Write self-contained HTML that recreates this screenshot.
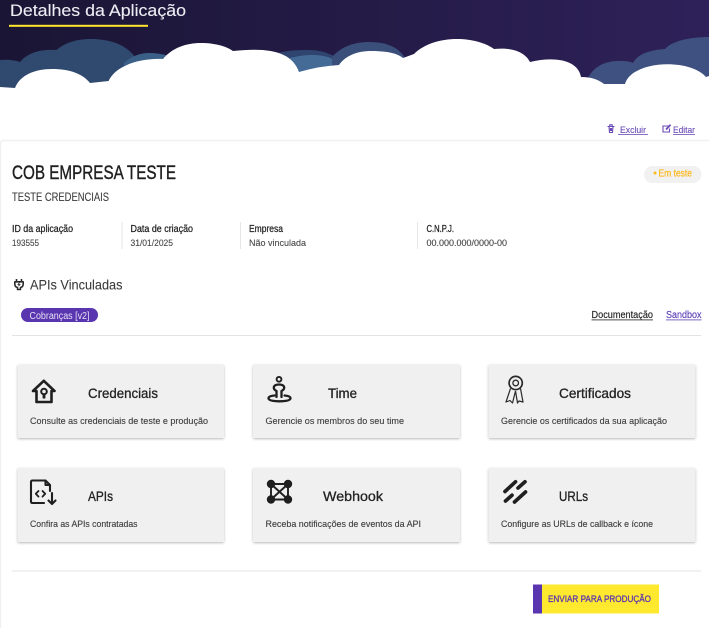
<!DOCTYPE html>
<html lang="pt-BR">
<head>
<meta charset="utf-8">
<title>Detalhes da Aplicação</title>
<style>
html,body{margin:0;padding:0;background:#fff;width:709px;height:628px;overflow:hidden}
svg{display:block;filter:blur(.25px)}
text{font-family:"Liberation Sans",sans-serif}
.card{fill:#f0f0f0;filter:url(#sh)}
.t{font-size:14px;fill:#222;stroke:#222;stroke-width:.3px}
.d{font-size:9.5px;fill:#3c3c3c;stroke:#3c3c3c;stroke-width:.12px}
.h{font-size:10px;fill:#1f1f1f;stroke:#1f1f1f;stroke-width:.25px}
.v{font-size:9.5px;fill:#484848;stroke:#484848;stroke-width:.12px}
.ic{fill:none;stroke:#1f1f1f;stroke-width:2.3;stroke-linejoin:round;stroke-linecap:round}
</style>
</head>
<body>
<svg xmlns="http://www.w3.org/2000/svg" width="709" height="628" viewBox="0 0 709 628">
<defs>
<linearGradient id="bg" x1="0" x2="1" y1="0" y2="0"><stop offset="0" stop-color="#1a1534"/><stop offset="1" stop-color="#2e2159"/></linearGradient>
<filter id="sh" x="-5%" y="-10%" width="110%" height="125%"><feDropShadow dx="0" dy="1" stdDeviation="1.3" flood-color="#000" flood-opacity=".28"/></filter>
</defs>

<rect width="709" height="100" fill="url(#bg)"/>
<!-- back clouds -->
<path fill="#30496f" d="M0 60Q12 59 20 62C28 52 42 49 56.5 50C66 42 78 39 90.5 39C112 39 130 46 138 62L138 95L0 95Z"/>
<path fill="#3b6088" d="M124 63C132 56 140 53 149 53C162 53 172 56 180 62L180 90L124 90Z"/>
<path fill="#2f4570" d="M274 54C288 50 298 50 308 50C318 50 326 52 334 56L340 90L274 90Z"/>
<path fill="#446a96" d="M290 58C298 56 305 55 312 55C325 55 335 58 341 66L341 90L290 90Z"/>
<path fill="#3a4f7a" d="M332 57C342 46 355 42 369 42C388 42 400 48 406 60L406 90L332 90Z"/>
<path fill="#3f5180" d="M588 78C594 66 606 61 618 61C624 61 630 61 633 63C637 55 648 50 665 49C672 41 690 37 709 37L709 95L588 95Z"/>
<!-- white cloud -->
<path fill="#fff" d="M0 87L15 88C20 75 35 69 52 69C70 69 83 74 90 83L108.6 81C114 68 135 58 163 59C172 48 186 43 201 43C214 43 226 46 233 51C270 47 292 52 299 72Q320 66 339 65C345 56 357 51 371 51C385 51 397 53 403 58L414 54C424 44 440 39 457 39C472 39 486 43 494 49C512 47 525 52 530 62C555 56 578 60 581 77C592 77 599 80 604 84L625 84C632 60 690 58 706 77L709 76L709 145L0 145Z"/>

<text x="10" y="16" font-size="16.5" fill="#ececf2" stroke="#ececf2" stroke-width=".12" textLength="176" lengthAdjust="spacingAndGlyphs">Detalhes da Aplicação</text>
<rect x="9" y="24.8" width="139" height="2" fill="#ffe52e"/>

<!-- top actions -->
<g fill="none" stroke="#6a4bb5" stroke-width="1.1">
<path d="M607.5 126.5H614.5M609 126.5L609.5 132.5H612.5L613 126.5M609.8 126V124.8H612.2V126M610.5 128V131M611.5 128V131"/>
<path d="M669 126H663V132H669.5V128.5"/>
<path d="M666 129.5L670.5 124.8" stroke-width="1.8"/>
</g>
<text x="620" y="133" font-size="9.5" fill="#6a4bb5" stroke="#6a4bb5" stroke-width=".12" textLength="26" lengthAdjust="spacingAndGlyphs">Excluir</text>
<rect x="618" y="134" width="30" height=".8" fill="#6a4bb5"/>
<text x="673" y="133" font-size="9.5" fill="#6a4bb5" stroke="#6a4bb5" stroke-width=".12" textLength="22" lengthAdjust="spacingAndGlyphs">Editar</text>
<rect x="673" y="134" width="22" height=".8" fill="#6a4bb5"/>

<!-- main card edges -->
<path d="M.5 628V144Q.5 140.5 4 140.5H709" fill="none" stroke="#f0f0f0" stroke-width="1.4"/>

<text x="12" y="179" font-size="19" fill="#1f1f1f" stroke="#1f1f1f" stroke-width=".4" textLength="164" lengthAdjust="spacingAndGlyphs">COB EMPRESA TESTE</text>
<text x="12" y="201" font-size="11.5" fill="#3c3c3c" stroke="#3c3c3c" stroke-width=".1" textLength="97" lengthAdjust="spacingAndGlyphs">TESTE CREDENCIAIS</text>

<rect x="644" y="166" width="57.5" height="17" rx="8.5" fill="#f1f1f1"/>
<circle cx="655" cy="173" r="1.5" fill="#fcb91e"/>
<text x="658.5" y="176.5" font-size="10" fill="#fcb91e" stroke="#fcb91e" stroke-width=".25" textLength="33.5" lengthAdjust="spacingAndGlyphs">Em teste</text>

<g fill="#e6e6e6">
<rect x="121.5" y="222" width="1" height="27"/>
<rect x="240" y="222" width="1" height="27"/>
<rect x="417" y="222" width="1" height="27"/>
</g>
<text class="h" x="12" y="232" textLength="61" lengthAdjust="spacingAndGlyphs">ID da aplicação</text>
<text class="v" x="12" y="246" textLength="27" lengthAdjust="spacingAndGlyphs">193555</text>
<text class="h" x="130.5" y="232" textLength="62.5" lengthAdjust="spacingAndGlyphs">Data de criação</text>
<text class="v" x="130.5" y="246" textLength="42.5" lengthAdjust="spacingAndGlyphs">31/01/2025</text>
<text class="h" x="249" y="232" textLength="34" lengthAdjust="spacingAndGlyphs">Empresa</text>
<text class="v" x="249" y="246" textLength="57" lengthAdjust="spacingAndGlyphs">Não vinculada</text>
<text class="h" x="426.5" y="232" textLength="27.5" lengthAdjust="spacingAndGlyphs">C.N.P.J.</text>
<text class="v" x="426.5" y="246" textLength="80.5" lengthAdjust="spacingAndGlyphs">00.000.000/0000-00</text>

<!-- plug icon -->
<path d="M16.5 279V281.5M21.5 279V281.5M14.8 281.8H23.2V284Q23.2 287 20.5 287.5V289.5H17.5V287.5Q14.8 287 14.8 284Z" fill="none" stroke="#2a2a2a" stroke-width="1.6" stroke-linejoin="round"/>
<path d="M19.6 282.5L18 284.5H20L18.4 286.2" fill="none" stroke="#2a2a2a" stroke-width=".8"/>
<text x="30" y="289.5" font-size="14" fill="#3c3c3c" stroke="#3c3c3c" stroke-width=".1" textLength="92.5" lengthAdjust="spacingAndGlyphs">APIs Vinculadas</text>

<rect x="21" y="308" width="77" height="14" rx="7" fill="#5a35b0"/>
<text x="29.5" y="319" font-size="10" fill="#e6e2f4" textLength="60" lengthAdjust="spacingAndGlyphs">Cobranças [v2]</text>

<text x="591.5" y="318" font-size="10" fill="#1f1f1f" stroke="#1f1f1f" stroke-width=".15" textLength="61.5" lengthAdjust="spacingAndGlyphs">Documentação</text>
<rect x="591.5" y="319.5" width="61.5" height=".8" fill="#222"/>
<text x="666" y="318" font-size="10" fill="#5a3fb5" stroke="#5a3fb5" stroke-width=".15" textLength="35.5" lengthAdjust="spacingAndGlyphs">Sandbox</text>
<rect x="666" y="319.5" width="35.5" height=".8" fill="#5a3fb5"/>

<rect x="12" y="335" width="689" height="1" fill="#e3e3e3"/>

<!-- cards -->
<rect class="card" x="17.5" y="364.5" width="206.5" height="73.5" rx="1.5"/>
<rect class="card" x="253" y="364.5" width="207" height="73.5" rx="1.5"/>
<rect class="card" x="488.5" y="364.5" width="207" height="73.5" rx="1.5"/>
<rect class="card" x="17.5" y="468" width="206.5" height="74" rx="1.5"/>
<rect class="card" x="253" y="468" width="207" height="74" rx="1.5"/>
<rect class="card" x="488.5" y="468" width="207" height="74" rx="1.5"/>

<text class="t" x="88" y="398" textLength="70" lengthAdjust="spacingAndGlyphs">Credenciais</text>
<text class="t" x="328" y="398" textLength="29" lengthAdjust="spacingAndGlyphs">Time</text>
<text class="t" x="559" y="398" textLength="72" lengthAdjust="spacingAndGlyphs">Certificados</text>
<text class="t" x="88" y="501" textLength="25" lengthAdjust="spacingAndGlyphs">APIs</text>
<text class="t" x="323" y="501" textLength="60" lengthAdjust="spacingAndGlyphs">Webhook</text>
<text class="t" x="559" y="501" textLength="29" lengthAdjust="spacingAndGlyphs">URLs</text>

<text class="d" x="30" y="424" textLength="178" lengthAdjust="spacingAndGlyphs">Consulte as credenciais de teste e produção</text>
<text class="d" x="265.5" y="424" textLength="138.5" lengthAdjust="spacingAndGlyphs">Gerencie os membros do seu time</text>
<text class="d" x="501" y="424" textLength="166" lengthAdjust="spacingAndGlyphs">Gerencie os certificados da sua aplicação</text>
<text class="d" x="30" y="527" textLength="107.5" lengthAdjust="spacingAndGlyphs">Confira as APIs contratadas</text>
<text class="d" x="265.5" y="527" textLength="155.5" lengthAdjust="spacingAndGlyphs">Receba notificações de eventos da API</text>
<text class="d" x="501" y="527" textLength="152" lengthAdjust="spacingAndGlyphs">Configure as URLs de callback e ícone</text>

<!-- icon: credenciais -->
<g class="ic">
<path d="M36.5 391H33L43.8 380.8L54.5 391H51.5V402H36.5Z" stroke-width="2.6"/>
<circle cx="44" cy="391.5" r="2.8" stroke-width="2"/>
<path d="M44 394V398.5" stroke-width="2.8" stroke-linecap="butt"/>
</g>
<!-- icon: time -->
<g class="ic">
<circle cx="279" cy="379.3" r="2.4" stroke-width="1.9"/>
<path d="M276.5 397V391Q273.5 389.5 273.8 387.2Q274.5 384.5 279 384.5Q283.5 384.5 284.2 387.2Q284.5 389.5 281.5 391V397"/>
<path d="M274.5 395.5Q268.5 396 268.5 398.3Q268.8 401.3 279.5 401.3Q290.2 401.3 290.5 398.3Q290.5 396 284.5 395.5"/>
</g>
<!-- icon: certificados -->
<g fill="none" stroke="#2a2a2a" stroke-width="1.2" stroke-linejoin="round">
<circle cx="515.7" cy="383" r="6.6" stroke-width="1.7"/>
<circle cx="515.7" cy="383" r="2.8" stroke-width="1.3"/>
<path d="M510.5 388.5L506 402L510 400.5L512.5 403L515.5 391M520.5 388.5L523 402L519 401L517.5 403L515.5 391"/>
</g>
<!-- icon: apis -->
<g class="ic">
<path d="M45.5 480.5H32.5Q31 480.5 31 482V501.5Q31 503 32.5 503H44M45.5 480.5L50 485V491M45.5 480.5V485H50" stroke-width="2.1"/>
<path d="M38.5 491L35.8 493.8L38.5 496.6M42.5 491L45.2 493.8L42.5 496.6" stroke-width="1.8"/>
<path d="M52 493V503.5M48.5 500.5L52 504L55.5 500.5" stroke-width="2.1"/>
</g>
<!-- icon: webhook -->
<g fill="#1f1f1f" stroke="#1f1f1f">
<path d="M271 484H288V499.5H271ZM271 484L288 499.5M288 484L271 499.5" fill="none" stroke-width="1.9"/>
<circle cx="271" cy="484" r="3.7"/>
<circle cx="288" cy="484" r="3.7"/>
<circle cx="271" cy="499.5" r="3.7"/>
<circle cx="288" cy="499.5" r="3.7"/>
</g>
<!-- icon: urls -->
<g fill="none" stroke="#1f1f1f" stroke-width="3.7" stroke-linecap="round">
<path d="M505 491.5L515.5 481.8"/>
<path d="M505.5 501L512 495.2"/>
<path d="M518 488L525 481.8"/>
<path d="M514.5 502L525.5 492"/>
</g>

<rect x="12" y="570.5" width="689" height="1" fill="#e3e3e3"/>

<rect x="533" y="584.5" width="126" height="29" fill="#ffe92e"/>
<rect x="533" y="584.5" width="9" height="29" fill="#5a35b0"/>
<text x="548" y="602" font-size="9.5" fill="#5a35b0" stroke="#5a35b0" stroke-width=".3" textLength="103" lengthAdjust="spacingAndGlyphs">ENVIAR PARA PRODUÇÃO</text>
</svg>
</body>
</html>
